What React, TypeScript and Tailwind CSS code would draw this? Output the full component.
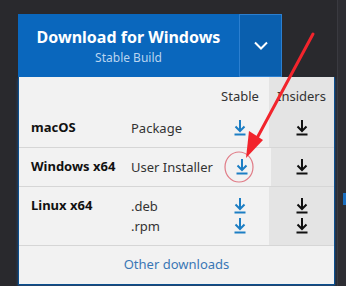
const DownloadIcon = ({ color }: { color: string }) => (
  <svg width="12" height="17" viewBox="0 0 12 17" fill="none" stroke={color} strokeWidth="2">
    <path d="M6 1 V12" />
    <path d="M1.5 7.5 L6 12 L10.5 7.5" />
    <path d="M0.5 15.5 H11.5" />
  </svg>
)

const Row = ({
  os,
  types,
  border = true,
}: {
  os: string
  types: string[]
  border?: boolean
}) => (
  <div className={`flex ${border ? 'border-b border-[#d6d6d6]' : ''}`}>
    <div className="flex-1 flex py-[9px]">
      <div className="w-[112px] pl-[12px] font-bold text-[#111] text-[13px] whitespace-nowrap">{os}</div>
      <div className="flex-1 min-w-0 flex flex-col text-[13px] text-[#333] leading-[20px] whitespace-nowrap">
        {types.map((t) => (
          <span key={t}>{t}</span>
        ))}
      </div>
      <div className="w-[58px] flex flex-col items-center gap-[3px] pt-[1px]">
        {types.map((t) => (
          <DownloadIcon key={t} color="#1c7ec4" />
        ))}
      </div>
    </div>
    <div className="w-[65px] bg-[#e4e4e4] flex flex-col items-center gap-[3px] py-[10px]">
      {types.map((t) => (
        <DownloadIcon key={t} color="#111" />
      ))}
    </div>
  </div>
)

export default function App() {
  return (
    <div
      className="relative w-[346px] h-[286px] bg-[#29292d] overflow-hidden"
      style={{ fontFamily: '"Noto Sans", "Open Sans", sans-serif' }}
    >
      <div className="absolute right-0 top-0 w-[9px] h-full bg-[#2e2e33] border-l border-[#3a3a40]" />
      <div className="absolute right-0 top-[193px] w-[3px] h-[12px] bg-[#1a6fc0]" />
      <div className="pt-[14px] pl-[18px]">
        <div className="flex h-[63px]">
          <div className="w-[221px] bg-[#0a67bd] flex flex-col items-center justify-center text-white">
            <div className="text-[16px] font-bold leading-[20px] mt-[2px]">Download for Windows</div>
            <div className="text-[12px] text-[#b9d5f0] leading-[16px] mt-[3px]">Stable Build</div>
          </div>
          <div className="w-[43px] bg-[#0a5fae] border border-[#2b7fd0] flex items-center justify-center">
            <svg width="14" height="9" viewBox="0 0 14 9" fill="none" stroke="#fff" strokeWidth="2">
              <path d="M1 1.5 L7 7.5 L13 1.5" />
            </svg>
          </div>
        </div>
        <div className="w-[317px] bg-[#f2f2f2] border border-[#0b4f8e] border-t-0 shadow-[0_2px_3px_rgba(30,100,180,0.6)]">
          <div className="flex">
            <div className="flex-1 flex justify-end pt-[10px] pb-[2px] text-[13px] text-[#333]">
              <span className="w-[58px] text-center">Stable</span>
            </div>
            <div className="w-[65px] bg-[#e4e4e4] pt-[10px] text-center text-[13px] text-[#333]">Insiders</div>
          </div>
          <Row os="macOS" types={['Package']} />
          <Row os="Windows x64" types={['User Installer']} />
          <Row os="Linux x64" types={['.deb', '.rpm']} />
          <div className="h-[38px] flex items-center justify-center text-[13px] text-[#3a77b5]">
            Other downloads
          </div>
        </div>
      </div>
      <svg className="absolute left-0 top-0" width="346" height="286">
        <ellipse cx="239" cy="167" rx="14" ry="15" fill="none" stroke="#e07b86" strokeWidth="1.2" />
        <path d="M313 34 L256 140" stroke="#f2242c" strokeWidth="3" strokeLinecap="round" />
        <path d="M246 158 L249 131 L263 140 Z" fill="#f2242c" />
      </svg>
    </div>
  )
}
